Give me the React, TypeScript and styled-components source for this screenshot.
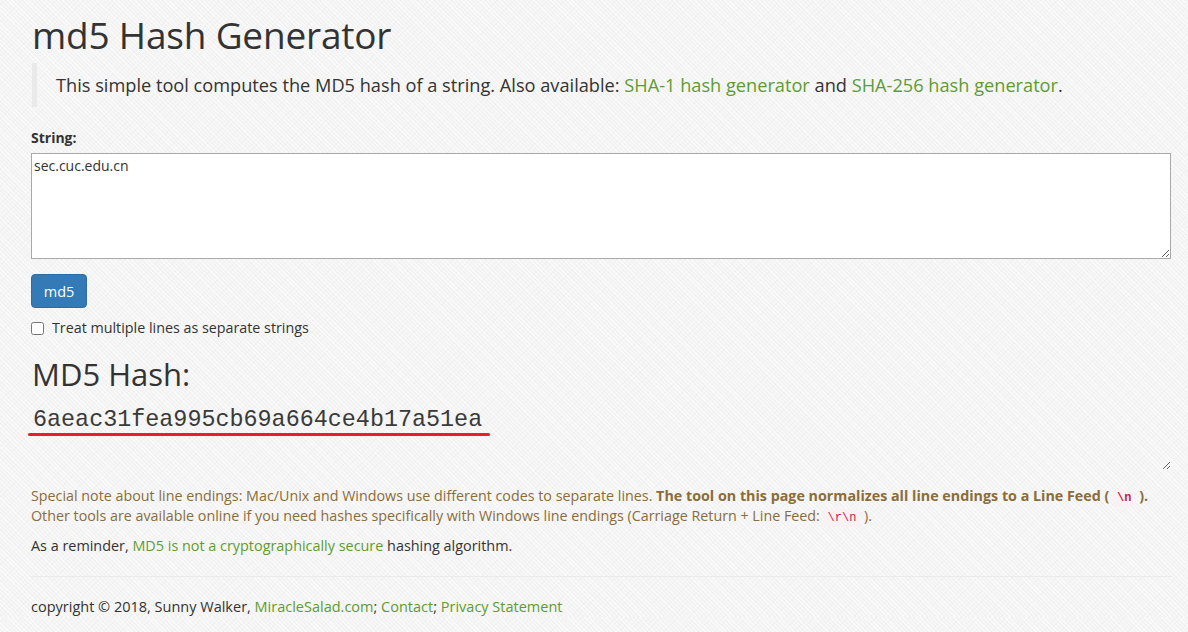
import React from "react";
import styled, { createGlobalStyle } from "styled-components";

const Global = createGlobalStyle`
  html, body { margin: 0; padding: 0; }
  body {
    background-color: #f4f4f4;
    background-image:
      repeating-linear-gradient(45deg, rgba(255,255,255,0.55) 0 1px, transparent 1px 3px),
      repeating-linear-gradient(-45deg, rgba(0,0,0,0.015) 0 1px, transparent 1px 4px);
    font-family: "Open Sans", "Noto Sans", sans-serif;
    color: #333;
    font-size: 14px;
    line-height: 1.42857;
  }
`;

const Container = styled.div`
  width: 1140px;
  padding: 0 17px 0 31px;
`;

const Title = styled.h1`
  margin: 12px 0 0 1px;
  font-size: 37px;
  font-weight: 400;
  line-height: 46px;
  color: #333;
  letter-spacing: -0.2px;
`;

const Quote = styled.blockquote`
  margin: 5px 0 0 1px;
  padding: 10px 0 10px 19px;
  border-left: 5px solid #eaeaea;
  font-size: 18.2px;
  line-height: 24px;
  color: #333;
`;

const Link = styled.a`
  color: #5e9c32;
  text-decoration: none;
`;

const Label = styled.label`
  display: block;
  margin-top: 21px;
  font-weight: 700;
  font-size: 14px;
  line-height: 20px;
`;

const Input = styled.textarea`
  display: block;
  box-sizing: border-box;
  width: 1140px;
  height: 106px;
  margin-top: 5px;
  padding: 3px 2px;
  border: 1px solid #a9a9a9;
  background: #fff;
  font-family: "Open Sans", "Noto Sans", sans-serif;
  font-size: 14px;
  line-height: 18px;
  color: #333;
  resize: vertical;
  outline: none;
`;

const Button = styled.button`
  display: block;
  margin-top: 15px;
  width: 56px;
  height: 34px;
  padding: 0;
  border: 1px solid #2e6da4;
  border-radius: 4px;
  background: #337ab7;
  color: #fff;
  font-family: "Open Sans", "Noto Sans", sans-serif;
  font-size: 14.5px;
`;

const CheckRow = styled.label`
  display: flex;
  align-items: center;
  gap: 8px;
  margin-top: 10px;
  font-size: 14.3px;
  line-height: 20px;
`;

const Box = styled.input`
  margin: 0;
  width: 13px;
  height: 13px;
`;

const HashTitle = styled.h2`
  margin: 16px 0 0 1px;
  font-size: 31px;
  font-weight: 400;
  line-height: 40px;
`;

const HashWrap = styled.div`
  position: relative;
`;

const HashOut = styled.textarea`
  display: block;
  box-sizing: border-box;
  width: 1140px;
  height: 75px;
  margin-top: 1px;
  padding: 9px 2px 1px;
  border: none;
  background: transparent;
  font-family: "Liberation Mono", "Courier New", monospace;
  font-size: 23.4px;
  line-height: 32px;
  color: #3a3a3a;
  resize: vertical;
  outline: none;
`;

const RedLine = styled.div`
  position: absolute;
  left: -3px;
  top: 38px;
  width: 462px;
  height: 3px;
  border-radius: 2px;
  background: #ee1c25;
`;

const Note = styled.p`
  margin: 16px 0 0;
  color: #8a6d3b;
  font-size: 14.3px;
  line-height: 20px;
`;

const Code = styled.code`
  padding: 2px 4px;
  border-radius: 4px;
  background: #f9f2f4;
  color: #c7254e;
  font-family: "Liberation Mono", monospace;
  font-size: 12px;
  line-height: 1;
`;

const Reminder = styled.p`
  margin: 10px 0 0;
  font-size: 14.4px;
  line-height: 20px;
`;

const Rule = styled.hr`
  margin: 20px 0 0;
  border: 0;
  border-top: 1px solid #eaeaea;
`;

const Footer = styled.footer`
  margin-top: 20px;
  font-size: 14.5px;
  line-height: 20px;
`;

export default function App() {
  return (
    <>
      <Global />
      <Container>
        <Title>md5 Hash Generator</Title>
        <Quote>
          This simple tool computes the MD5 hash of a string. Also available:{" "}
          <Link href="#">SHA-1 hash generator</Link> and{" "}
          <Link href="#">SHA-256 hash generator</Link>.
        </Quote>
        <Label>String:</Label>
        <Input defaultValue="sec.cuc.edu.cn" />
        <Button>md5</Button>
        <CheckRow>
          <Box type="checkbox" />
          Treat multiple lines as separate strings
        </CheckRow>
        <HashTitle>MD5 Hash:</HashTitle>
        <HashWrap>
          <HashOut readOnly defaultValue="6aeac31fea995cb69a664ce4b17a51ea" />
          <RedLine />
        </HashWrap>
        <Note>
          Special note about line endings: Mac/Unix and Windows use different codes to separate lines.{" "}
          <b>
            The tool on this page normalizes all line endings to a Line Feed ( <Code>\n</Code> ).
          </b>
          <br />
          Other tools are available online if you need hashes specifically with Windows line endings
          (Carriage Return + Line Feed: <Code>\r\n</Code> ).
        </Note>
        <Reminder>
          As a reminder, <Link href="#">MD5 is not a cryptographically secure</Link> hashing algorithm.
        </Reminder>
        <Rule />
        <Footer>
          copyright © 2018, Sunny Walker, <Link href="#">MiracleSalad.com</Link>;{" "}
          <Link href="#">Contact</Link>; <Link href="#">Privacy Statement</Link>
        </Footer>
      </Container>
    </>
  );
}
